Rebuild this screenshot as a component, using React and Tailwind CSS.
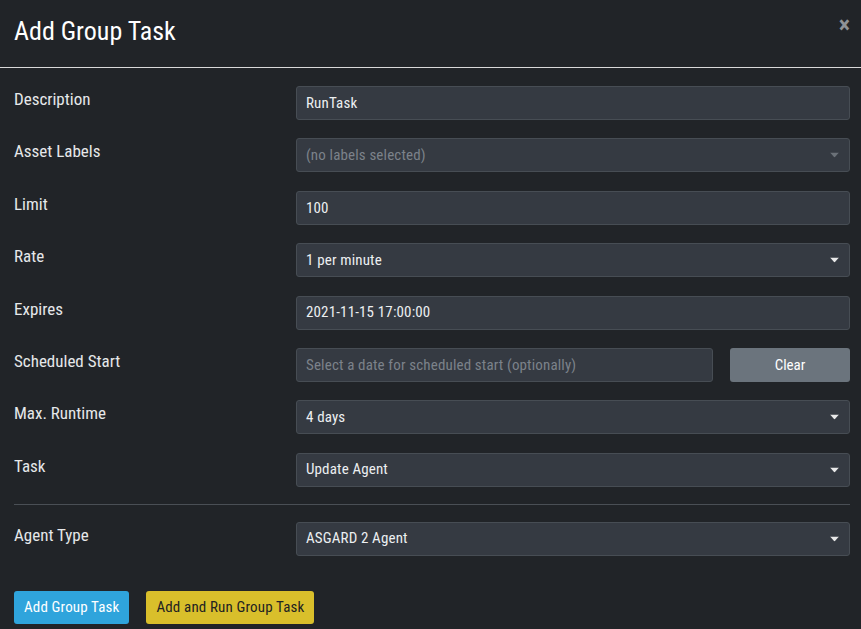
import React from 'react';

const font = { fontFamily: 'Roboto, "Noto Sans", sans-serif' };

const Caret = ({ dim = false }) => (
  <svg width="9" height="5" viewBox="0 0 9 5" className="absolute right-[10px] top-1/2 -translate-y-1/2">
    <path d="M0 0 L9 0 L4.5 5 Z" fill={dim ? '#6b7178' : '#e8e8e8'} />
  </svg>
);

const Field = ({ value, placeholder, select = false, dim = false, className = '' }) => (
  <div
    className={`relative h-[34px] rounded-[3px] border border-[#474d54] bg-[#353a42] pl-[9px] flex items-center text-[15px] tracking-[0.01em] ${className}`}
  >
    <span className={value ? 'text-[#eceff1]' : 'text-[#7c828a]'}>{value || placeholder}</span>
    {select && <Caret dim={dim} />}
  </div>
);

const Row = ({ label, children }) => (
  <div className="flex h-[34px]">
    <div className="w-[282px] shrink-0 text-[17px] leading-[24px] text-[#e6e8ea] pt-[1px]">{label}</div>
    <div className="flex-1 flex gap-[17px]">{children}</div>
  </div>
);

export default function App() {
  return (
    <div className="min-h-screen w-full bg-[#212428] font-stretch-semi-condensed" style={font}>
      <div className="relative h-[68px] border-b border-[#d9d9d9] px-[14px] flex items-center">
        <h1 className="text-[26px] leading-none text-white -mt-[6px]">Add Group Task</h1>
        <span className="absolute right-[11px] top-[13px] text-[24px] font-bold text-[#8e9296] leading-none">×</span>
      </div>

      <div className="px-[11px] pl-[14px] pt-[18px] flex flex-col gap-[18.4px]">
        <Row label="Description">
          <Field value="RunTask" className="flex-1" />
        </Row>
        <Row label="Asset Labels">
          <Field placeholder="(no labels selected)" select dim className="flex-1" />
        </Row>
        <Row label="Limit">
          <Field value="100" className="flex-1" />
        </Row>
        <Row label="Rate">
          <Field value="1 per minute" select className="flex-1" />
        </Row>
        <Row label="Expires">
          <Field value="2021-11-15 17:00:00" className="flex-1" />
        </Row>
        <Row label="Scheduled Start">
          <Field placeholder="Select a date for scheduled start (optionally)" className="flex-1" />
          <button className="w-[120px] h-[34px] rounded-[3px] bg-[#6b747d] text-[15px] text-white">Clear</button>
        </Row>
        <Row label="Max. Runtime">
          <Field value="4 days" select className="flex-1" />
        </Row>
        <Row label="Task">
          <Field value="Update Agent" select className="flex-1" />
        </Row>
      </div>

      <div className="mx-[11px] ml-[14px] mt-[17px] border-t border-[#4a4f55]" />

      <div className="px-[11px] pl-[14px] pt-[17px]">
        <Row label="Agent Type">
          <Field value="ASGARD 2 Agent" select className="flex-1" />
        </Row>
      </div>

      <div className="px-[14px] pt-[35px] flex gap-[17px]">
        <button className="h-[33px] px-[10px] rounded-[3px] bg-[#2fa4dc] text-[15px] tracking-[0.01em] text-white">Add Group Task</button>
        <button className="h-[33px] px-[10px] rounded-[3px] bg-[#d9bf2b] text-[15px] tracking-[0.01em] text-[#222]">Add and Run Group Task</button>
      </div>
    </div>
  );
}
